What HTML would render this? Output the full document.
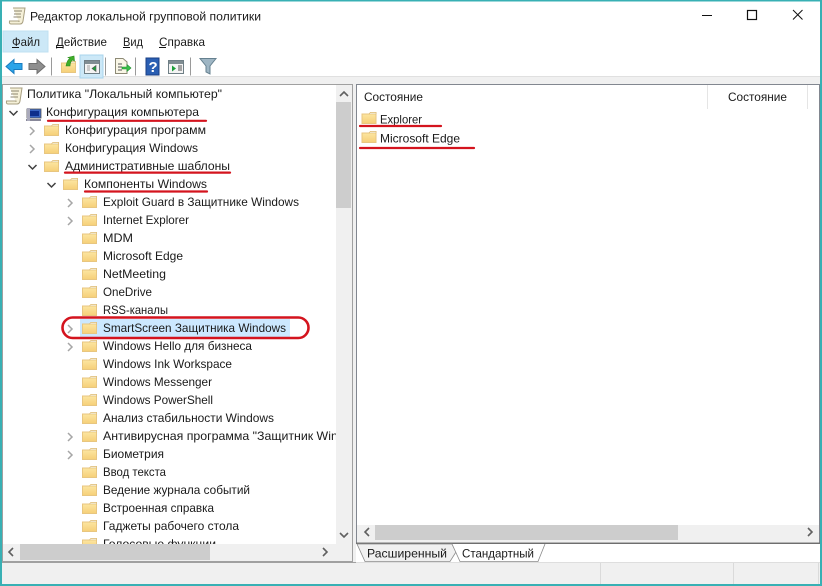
<!DOCTYPE html>
<html><head><meta charset="utf-8">
<style>
html,body{margin:0;padding:0;background:#fff}
svg{display:block}
text{font-family:"Liberation Sans",sans-serif;font-size:12px;fill:#1a1a1a;dominant-baseline:alphabetic}
</style></head><body>
<svg width="822" height="586" viewBox="0 0 822 586" xmlns="http://www.w3.org/2000/svg">
<defs>
<linearGradient id="fg" x1="0" y1="0" x2="0" y2="1"><stop offset="0" stop-color="#fde9a8"/><stop offset="1" stop-color="#f6cf78"/></linearGradient>
<symbol id="f" viewBox="0 0 15 14" width="15" height="14" overflow="visible">
<path d="M0.500 3V12.500H14.500V1.500H9L7.500 3Z" fill="url(#fg)" stroke="#e8c680" stroke-width="1"/>
<path d="M9 1.500H14.500V3H7.500Z" fill="#f8f4e6" stroke="#d9b468" stroke-width=".5"/>
</symbol>
<symbol id="s" viewBox="0 0 20 20" width="20" height="20" overflow="visible">
<path d="M5 2H17L15 15Q14.500 18 12 18H3Q1 18 1.500 15H11L11 16" fill="#f5f0d8" stroke="#a89f80" stroke-width="1"/>
<path d="M6 5H14M6 8H13M5.500 11H13" stroke="#8d8670" stroke-width="1"/>
</symbol>
</defs>

<!-- window -->
<rect width="822" height="586" fill="#fff"/>
<rect x="0" y="562" width="822" height="24" fill="#f0f0f0"/>
<!-- menu highlight -->
<rect x="3" y="31" width="45" height="21" fill="#cce8f7" stroke="#bfe0f2"/>
<!-- toolbar -->
<rect x="2" y="76" width="818" height="8" fill="#f0f0f0"/>
<rect x="2" y="76" width="818" height="1" fill="#e0e0e0"/>

<!-- title -->
<use href="#s" x="8" y="6"/>
<text x="30" y="20.500" textLength="231" lengthAdjust="spacingAndGlyphs">Редактор локальной групповой политики</text>
<path d="M702 15.500H712" stroke="#111"/>
<rect x="747.500" y="10.500" width="9" height="9" fill="none" stroke="#111" stroke-width="1.200"/>
<path d="M793 10L802.500 19.500M802.500 10L793 19.500" stroke="#111" stroke-width="1"/>

<!-- menu -->
<text x="12" y="46" textLength="28" lengthAdjust="spacingAndGlyphs">Файл</text>
<text x="56" y="46" textLength="51" lengthAdjust="spacingAndGlyphs">Действие</text>
<text x="123" y="46" textLength="20" lengthAdjust="spacingAndGlyphs">Вид</text>
<text x="159" y="46" textLength="46" lengthAdjust="spacingAndGlyphs">Справка</text>
<path d="M12 47.500H19M56 47.500H63M123 47.500H130M159 47.500H166" stroke="#111"/>

<!-- toolbar icons -->
<path d="M6 66.500L14 59.500V63.500H22V69.500H14V73.500Z" fill="#2ba4e8" stroke="#1a7cc0" stroke-width="1"/>
<path d="M45 66.500L37 59.500V63.500H29V69.500H37V73.500Z" fill="#8f8f8f" stroke="#6f6f6f" stroke-width="1"/>
<path d="M51.500 57.500V75.500M105.500 57.500V75.500M135.500 57.500V75.500M190.500 57.500V75.500" stroke="#9a9a9a"/>
<use href="#f" x="61" y="60"/>
<path d="M66 66Q67 60 70 58.500L68 57.500L74 56L74.500 61L72.500 60Q70 62 70 66Z" fill="#3fae2a" stroke="#2b8a1b" stroke-width=".6"/>
<rect x="80" y="55" width="23" height="23" fill="#cce8f7" stroke="#a9d4ec"/>
<rect x="84.500" y="60.500" width="15" height="13" fill="#f4f4f4" stroke="#6f7f86"/>
<rect x="85" y="61" width="14" height="3" fill="#808d93"/>
<path d="M87 66H90M87 68H90M87 70H90M92 68.500L96 65.500V71.500Z" fill="#1d9e3a" stroke="#555" stroke-width=".6"/>
<path d="M115.500 58.500H123L127 62V73.500H115.500Z" fill="#f9f6e6" stroke="#8d8a76"/>
<path d="M118 64H122M118 67H122M118 70H122" stroke="#555"/>
<path d="M122 67H127V64.500L131 68L127 71.500V69H122Z" fill="#38c14a" stroke="#1e8c2d" stroke-width=".6"/>
<rect x="146" y="58" width="13" height="17" fill="#2a5fb3" stroke="#1a3f85"/>
<text x="148.500" y="72" style="font-size:15px;font-weight:bold;fill:#fff">?</text>
<rect x="168.500" y="60.500" width="15" height="13" fill="#f4f4f4" stroke="#6f7f86"/>
<rect x="169" y="61" width="14" height="3" fill="#808d93"/>
<path d="M172 65.500L176 68.500L172 71.500Z" fill="#1d9e3a"/>
<path d="M178 66H182M178 68H182M178 70H182" stroke="#555"/>
<path d="M200 58.500H216L210 66V74L206 72V66Z" fill="#9fb6c4" stroke="#65808f"/>

<!-- panel gap -->
<rect x="353" y="84" width="3" height="478" fill="#f0f0f0"/>
<!-- left panel -->
<rect x="2.500" y="84.500" width="350" height="477" fill="#fff" stroke="#a0a0a0"/>
<!-- right panel -->
<rect x="356.500" y="84.500" width="463" height="459" fill="#fff" stroke="#828790"/>
<!-- column header separators -->
<path d="M707.500 85V109M807.500 85V109" stroke="#e5e5e5"/>
<text x="364" y="101" textLength="59" lengthAdjust="spacingAndGlyphs">Состояние</text>
<text x="728" y="101" textLength="59" lengthAdjust="spacingAndGlyphs">Состояние</text>
<use href="#f" x="361.500" y="111"/>
<use href="#f" x="361.500" y="130"/>
<text x="380" y="123.500" textLength="42" lengthAdjust="spacingAndGlyphs">Explorer</text>
<text x="380" y="142.500" textLength="80" lengthAdjust="spacingAndGlyphs">Microsoft Edge</text>

<!-- left tree -->
<rect x="80" y="319" width="210" height="18" fill="#cce8ff"/>
<g transform="translate(0,1)">
<use href="#s" x="5" y="85"/>
<text x="27" y="97" textLength="195" lengthAdjust="spacingAndGlyphs">Политика "Локальный компьютер"</text>
<rect x="27" y="108" width="14" height="9" fill="#3a66c4" stroke="#555" stroke-width=".8"/>
<rect x="29" y="110" width="10" height="5" fill="#0e2f8c"/>
<path d="M26 118H41V120H26Z" fill="#889"/>
<path d="M27 107H30V120H27Z" fill="#aab"/>
<text x="46" y="115" textLength="153" lengthAdjust="spacingAndGlyphs">Конфигурация компьютера</text>
<text x="65" y="133" textLength="141" lengthAdjust="spacingAndGlyphs">Конфигурация программ</text>
<text x="65" y="151" textLength="133" lengthAdjust="spacingAndGlyphs">Конфигурация Windows</text>
<text x="65" y="169" textLength="165" lengthAdjust="spacingAndGlyphs">Административные шаблоны</text>
<text x="84" y="187" textLength="123" lengthAdjust="spacingAndGlyphs">Компоненты Windows</text>
<text x="103" y="205" textLength="196" lengthAdjust="spacingAndGlyphs">Exploit Guard в Защитнике Windows</text>
<text x="103" y="223" textLength="86" lengthAdjust="spacingAndGlyphs">Internet Explorer</text>
<text x="103" y="241" textLength="30" lengthAdjust="spacingAndGlyphs">MDM</text>
<text x="103" y="259" textLength="80" lengthAdjust="spacingAndGlyphs">Microsoft Edge</text>
<text x="103" y="277" textLength="63" lengthAdjust="spacingAndGlyphs">NetMeeting</text>
<text x="103" y="295" textLength="49" lengthAdjust="spacingAndGlyphs">OneDrive</text>
<text x="103" y="313" textLength="65" lengthAdjust="spacingAndGlyphs">RSS-каналы</text>
<text x="103" y="331" textLength="183" lengthAdjust="spacingAndGlyphs">SmartScreen Защитника Windows</text>
<text x="103" y="349" textLength="149" lengthAdjust="spacingAndGlyphs">Windows Hello для бизнеса</text>
<text x="103" y="367" textLength="129" lengthAdjust="spacingAndGlyphs">Windows Ink Workspace</text>
<text x="103" y="385" textLength="109" lengthAdjust="spacingAndGlyphs">Windows Messenger</text>
<text x="103" y="403" textLength="110" lengthAdjust="spacingAndGlyphs">Windows PowerShell</text>
<text x="103" y="421" textLength="171" lengthAdjust="spacingAndGlyphs">Анализ стабильности Windows</text>
<svg x="0" y="425" width="336" height="20"><text x="103" y="14" textLength="268" lengthAdjust="spacingAndGlyphs">Антивирусная программа "Защитник Windows"</text></svg>
<text x="103" y="457" textLength="61" lengthAdjust="spacingAndGlyphs">Биометрия</text>
<text x="103" y="475" textLength="63" lengthAdjust="spacingAndGlyphs">Ввод текста</text>
<text x="103" y="493" textLength="147" lengthAdjust="spacingAndGlyphs">Ведение журнала событий</text>
<text x="103" y="511" textLength="111" lengthAdjust="spacingAndGlyphs">Встроенная справка</text>
<text x="103" y="529" textLength="136" lengthAdjust="spacingAndGlyphs">Гаджеты рабочего стола</text>
<svg x="0" y="534" width="336" height="9"><text x="103" y="13" textLength="113" lengthAdjust="spacingAndGlyphs">Голосовые функции</text></svg>

<!-- tree folders -->
<use href="#f" x="44" y="122"/><use href="#f" x="44" y="140"/><use href="#f" x="44" y="158"/>
<use href="#f" x="63" y="176"/>
<use href="#f" x="82" y="194"/><use href="#f" x="82" y="212"/><use href="#f" x="82" y="230"/><use href="#f" x="82" y="248"/>
<use href="#f" x="82" y="266"/><use href="#f" x="82" y="284"/><use href="#f" x="82" y="302"/><use href="#f" x="82" y="320"/>
<use href="#f" x="82" y="338"/><use href="#f" x="82" y="356"/><use href="#f" x="82" y="374"/><use href="#f" x="82" y="392"/>
<use href="#f" x="82" y="410"/><use href="#f" x="82" y="428"/><use href="#f" x="82" y="446"/><use href="#f" x="82" y="464"/>
<use href="#f" x="82" y="482"/><use href="#f" x="82" y="500"/><use href="#f" x="82" y="518"/>
<svg x="80" y="536" width="20" height="7"><use href="#f" x="2" y="0"/></svg>

<!-- chevrons -->
<g fill="none" stroke="#404040" stroke-width="1.500">
<path d="M9.500 110L13.500 114L17.500 110"/>
<path d="M28.500 164L32.500 168L36.500 164"/>
<path d="M47.500 182L51.500 186L55.500 182"/>
</g>
<g fill="none" stroke="#a6a6a6" stroke-width="1.500">
<path d="M30 126L34 130L30 134M30 144L34 148L30 152"/>
<path d="M68 198L72 202L68 206M68 216L72 220L68 224M68 324L72 328L68 332M68 342L72 346L68 350M68 432L72 436L68 440M68 450L72 454L68 458"/>
</g>
</g>

<!-- vscroll -->
<rect x="336" y="85" width="16" height="459" fill="#f0f0f0"/>
<rect x="336" y="102" width="15" height="106" fill="#cdcdcd"/>
<path d="M340 96L344 92L348 96M340 533L344 537L348 533" fill="none" stroke="#606060" stroke-width="1.600"/>
<!-- left hscroll -->
<rect x="3" y="544" width="349" height="17" fill="#f0f0f0"/>
<rect x="20" y="544" width="190" height="16" fill="#cdcdcd"/>
<path d="M13 548L9 552L13 556M323 548L327 552L323 556" fill="none" stroke="#606060" stroke-width="1.600"/>
<!-- right hscroll -->
<rect x="357" y="525" width="462" height="17" fill="#f0f0f0"/>
<rect x="375" y="525" width="303" height="15" fill="#cdcdcd"/>
<path d="M369 528L365 532L369 536M808 528L812 532L808 536" fill="none" stroke="#606060" stroke-width="1.600"/>
<rect x="356" y="542.500" width="464" height="1.500" fill="#6e6e6e"/>

<!-- tabs -->
<path d="M357 544L365 561.500H450L456 552L452 544Z" fill="#f0f0f0" stroke="#8a8a8a" stroke-width=".8"/>
<path d="M452 544L460 561.500H538L545 544" fill="#fff" stroke="#8a8a8a" stroke-width=".8"/>
<text x="367" y="557.500" textLength="80" lengthAdjust="spacingAndGlyphs">Расширенный</text>
<text x="462" y="557.500" textLength="72" lengthAdjust="spacingAndGlyphs">Стандартный</text>

<!-- status bar -->
<rect x="356" y="562" width="464" height="1" fill="#dedede"/>
<rect x="2" y="562" width="354" height="1" fill="#a0a0a0"/>
<path d="M600.500 563V584M733.500 563V584M818.500 563V584" stroke="#dadada"/>

<!-- teal border -->
<rect x="0" y="0" width="822" height="1.500" fill="#38b0b4"/>
<rect x="0" y="0" width="2" height="586" fill="#38b0b4"/>
<rect x="820" y="0" width="2" height="586" fill="#38b0b4"/>
<rect x="0" y="584" width="822" height="2" fill="#38b0b4"/>

<!-- red annotations -->
<g stroke="#d4141e" stroke-width="2.200" fill="none" stroke-linecap="round">
<path d="M48 120.800H206"/>
<path d="M65 172.600H230"/>
<path d="M85 191.500H207"/>
<path d="M360 126H441"/>
<path d="M360 148H474"/>
<rect x="62.500" y="317.500" width="246" height="20.500" rx="10.200" stroke-width="2.600"/>
</g>
</svg>
</body></html>
